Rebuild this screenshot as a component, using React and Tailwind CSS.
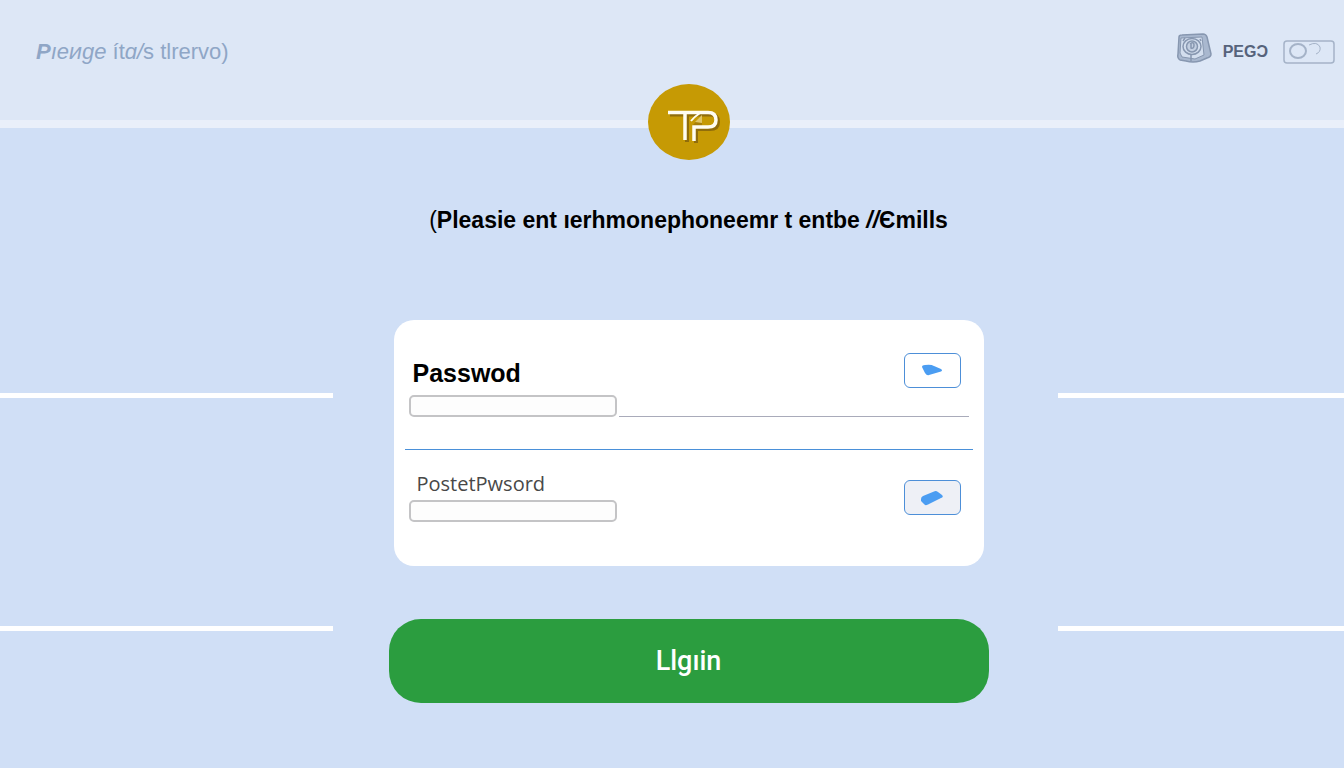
// App.jsx
// Login page: header bar with logo badge, credentials card and submit button.

import React, { useState } from "react";

const CameraIcon = () => (
  <svg className="h-8 w-9" viewBox="0 0 36 32" fill="none" stroke="#8797b0">
    <path d="M3 5 Q3 3 6 3 L27 2 Q30 2 31 5 L35 22 Q35 25 31 26 L24 29 Q17 31 10 29 L4 28 Q1 26 2 22 Z" fill="#a9b8cf" strokeWidth="1.500" strokeLinejoin="round" />
    <path d="M5 6 L26 5 L28 23 L19 27 L6 25 L4 21 Z" fill="#d3deee" strokeWidth="1" strokeLinejoin="round" />
    <ellipse cx="16" cy="14.500" rx="9" ry="8" strokeWidth="1.500" />
    <ellipse cx="16" cy="14.500" rx="5.500" ry="5.500" fill="#c3cfe1" strokeWidth="1.500" />
    <path d="M14 12 Q18 9 18 13 Q18 17 15 16 V12 M15 23 V29 M9 6 L7 9 M24 7 L25 9" strokeWidth="1.500" />
  </svg>
);

const Logo = () => (
  <svg className="block h-[76px] w-[82px]" viewBox="0 0 82 76" fill="none" role="img" aria-label="TP">
    <ellipse cx="41" cy="38" rx="41" ry="38" fill="#c69a04" />
    <g transform="translate(2 2)" stroke="#906d0b" strokeWidth="4">
      <path d="M20 28.500 H60 Q68 28.500 68 36 Q68 43 60 43 H46 V57" />
      <path d="M37 29 V56" />
    </g>
    <path d="M44 42 L54 31 V42 Z" fill="#a77f08" />
    <path d="M47 38 L54 31 V39 Z" fill="#e0c565" />
    <g stroke="#fffdf2" strokeWidth="3.500">
      <path d="M20 28.500 H60 Q68 28.500 68 36 Q68 43 60 43 H46 V57" />
      <path d="M37 29 V56" />
      <path d="M43 37 Q46 33 52 29" strokeWidth="2" />
    </g>
  </svg>
);

const Header = () => {
  const [enabled, setEnabled] = useState(false);

  return (
    <header className="relative flex h-32 items-start justify-between border-b-8 border-[#e9effa] bg-[#dde7f6] pl-9 pr-[9px]">
      <p className="pt-10 font-['Liberation_Sans',sans-serif] text-[22px] leading-6 text-[#8fa6c6]">
        <span className="font-bold italic">P</span>
        <span className="italic">ıeᴎge</span> ít<span className="italic">ɑ/</span>s tlrervo)
      </p>
      <div className="flex items-center pt-8">
        <CameraIcon />
        <span className="ml-[11px] pt-2 font-['Liberation_Sans',sans-serif] text-[16px] leading-6 font-bold text-[#56637b]">
          PEGƆ
        </span>
        <label className="ml-[15px] cursor-pointer pt-2">
          <input
            type="checkbox"
            className="sr-only"
            aria-label="Toggle"
            checked={enabled}
            onChange={(e) => setEnabled(e.target.checked)}
          />
          <svg className="h-6 w-[52px]" viewBox="0 0 52 24" fill="none" stroke="#a5b3c8">
            <rect x="1" y="1" width="50" height="22" rx="3" strokeWidth="1.500" />
            <ellipse cx="15" cy="11" rx="8" ry="7" strokeWidth="2" />
            <path d="M26 5 Q34 1 37 7 Q38 12 33 14" strokeWidth="1" />
          </svg>
        </label>
      </div>
      <div className="absolute top-[84px] left-[51.25%] -translate-x-1/2">
        <Logo />
      </div>
    </header>
  );
};

const SideLines = () => (
  <div aria-hidden="true" className="flex flex-col gap-[228px] pt-[265px]">
    <div className="h-[5px] bg-white" />
    <div className="h-[5px] bg-white" />
  </div>
);

const inputClass = "block h-[22px] w-52 rounded-[5px] border-2 border-[#c4c4c6] bg-[#fdfdfd] px-2 text-sm";
const iconButtonClass = "flex h-[35px] w-[57px] items-center justify-center rounded-md border border-[#4d8fd8]";

const LoginCard = () => {
  const [password, setPassword] = useState("");
  const [confirm, setConfirm] = useState("");

  return (
    <div className="w-full max-w-[590px] rounded-[20px] bg-white px-[11px] pb-11">
      <div className="border-b border-[#4a90d9] pt-[31px] pb-8">
        <div className="flex items-center justify-between pr-3 pl-2">
          <label
            htmlFor="password"
            className="pt-1.5 font-['Liberation_Sans',sans-serif] text-[25px] leading-8 font-bold text-black"
          >
            Passwod
          </label>
          <button type="button" aria-label="Show password" className={iconButtonClass}>
            <svg className="h-3.5 w-[22px]" viewBox="0 0 22 14" fill="#4b9df2">
              <path d="M1 4 Q1 2 4 2 Q10 1 13 3 L20 6 Q22 7.500 20 8.500 L8 12 Q6 13 4 10 Z" />
            </svg>
          </button>
        </div>
        <div className="mt-1.5 flex items-end pr-1 pl-1">
          <input
            id="password"
            type="password"
            className={inputClass}
            value={password}
            onChange={(e) => setPassword(e.target.value)}
          />
          <div className="ml-0.5 h-px flex-1 bg-[#a9abba]" />
        </div>
      </div>

      <div className="flex items-start justify-between pt-[22px] pr-3 pl-1">
        <div>
          <label
            htmlFor="confirm"
            className="block pl-2 font-['Open_Sans','Noto_Sans',sans-serif] text-[20px] leading-6 text-[#484848]"
          >
            PostetPwsord
          </label>
          <input
            id="confirm"
            type="password"
            className={`${inputClass} mt-1`}
            value={confirm}
            onChange={(e) => setConfirm(e.target.value)}
          />
        </div>
        <button type="button" aria-label="Show confirmation" className={`${iconButtonClass} mt-2 bg-[#eef0f6]`}>
          <svg className="h-4 w-6" viewBox="0 0 24 16" fill="#4b9df2">
            <path d="M1 9 Q1 7 3 6 L14 1.500 Q16 0.500 18 2 L22 5 Q24 7 21 8 L8 14.500 Q5 16 4 14 L1 11 Z" />
          </svg>
        </button>
      </div>
    </div>
  );
};

const App = () => (
  <div className="min-h-screen bg-[#d0dff6]">
    <Header />
    <main className="grid grid-cols-[333fr_725fr_286fr]">
      <SideLines />
      <form onSubmit={(e) => e.preventDefault()} className="flex flex-col items-center pt-[76px] pr-[14px] pb-16">
        <h1 className="font-['Liberation_Sans',sans-serif] text-[23px] leading-8 font-bold whitespace-nowrap text-black">
          <span className="font-normal">(</span>Pleasie ent ıerhmonephoneemr t entbe <i>//</i>Єmills
        </h1>
        <div className="mt-[84px] flex w-full justify-center">
          <LoginCard />
        </div>
        <button
          type="submit"
          className="mt-[53px] h-[84px] w-full max-w-[600px] rounded-[32px] bg-[#2b9d3f] font-['Roboto','Liberation_Sans',sans-serif] text-[27px] font-medium text-white"
        >
          Llgıin
        </button>
      </form>
      <SideLines />
    </main>
  </div>
);

export default App;
